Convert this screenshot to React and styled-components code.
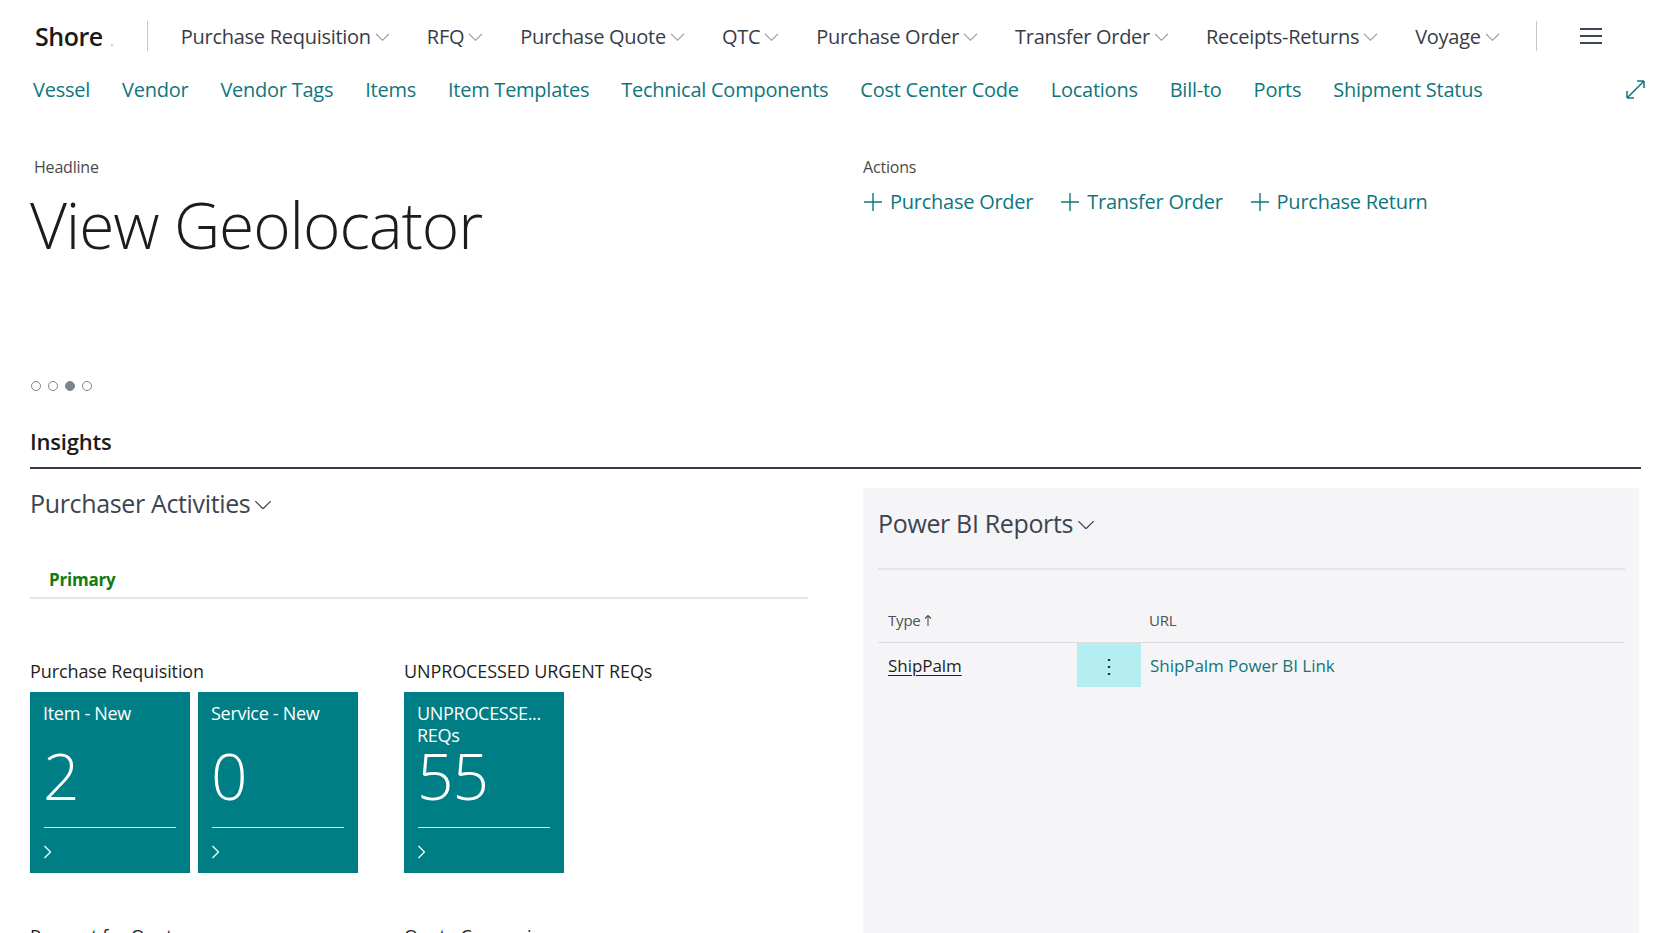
import React from "react";
import styled, { createGlobalStyle } from "styled-components";

const GlobalStyle = createGlobalStyle`
  html, body {
    margin: 0;
    padding: 0;
    overflow: hidden;
    background: #ffffff;
  }
  body {
    font-family: "Open Sans", "Noto Sans", sans-serif;
    color: #212121;
  }
`;

const teal = "#0f767d";
const slate = "#373d48";

const Page = styled.div`
  width: 1659px;
  height: 933px;
  overflow: hidden;
`;

const TopBar = styled.div`
  height: 72px;
  display: flex;
  align-items: center;
  padding-left: 35px;
`;

const Brand = styled.div`
  font-size: 25px;
  font-weight: 600;
  color: #1b1b1b;
  letter-spacing: -0.5px;
  display: flex;
  align-items: baseline;
`;

const BrandDot = styled.span`
  font-size: 10px;
  color: #9aa0a6;
  margin-left: 8px;
`;

const VDivider = styled.div`
  width: 1px;
  height: 30px;
  background: #c8c8c8;
  margin-left: ${(p) => p.$left || 0}px;
`;

const Menu = styled.nav`
  display: flex;
  align-items: center;
  gap: 37px;
  margin-left: 33px;
`;

const MenuItem = styled.div`
  display: flex;
  align-items: center;
  font-size: 20px;
  color: ${slate};
  letter-spacing: -0.28px;
  white-space: nowrap;
`;

const Caret = ({ size = 15, color = "#8a8f97" }) => (
  <svg width={size} height={size * 0.55} viewBox="0 0 16 9" style={{ marginLeft: 4, marginTop: 3 }}>
    <path d="M1 1 L8 8 L15 1" fill="none" stroke={color} strokeWidth="1.1" />
  </svg>
);

const MenuButton = styled.div`
  width: 22px;
  height: 16px;
  display: flex;
  flex-direction: column;
  justify-content: space-between;
  margin-left: 43px;
  span {
    display: block;
    height: 2px;
    background: #3c4654;
  }
`;

const LinkBar = styled.div`
  height: 34px;
  display: flex;
  align-items: center;
  padding: 0 13px 0 33px;
`;

const LinkList = styled.div`
  display: flex;
  gap: 32px;
  flex: 1;
`;

const NavLink = styled.a`
  font-size: 20px;
  color: ${teal};
  letter-spacing: -0.25px;
  white-space: nowrap;
  text-decoration: none;
`;

const HeadRow = styled.div`
  display: grid;
  grid-template-columns: 833px 1fr;
  padding-left: 30px;
  margin-top: 50px;
`;

const SmallCaption = styled.div`
  font-size: 16px;
  line-height: 22px;
  color: #4a4a4a;
  letter-spacing: -0.2px;
  padding-left: ${(p) => p.$indent || 0}px;
`;

const BigTitle = styled.h1`
  margin: 7px 0 0;
  font-size: 64px;
  line-height: 80px;
  font-weight: 300;
  color: #1c1c1c;
  letter-spacing: -1.1px;
`;

const Dots = styled.div`
  display: flex;
  gap: 7px;
  margin: 116px 0 0 1px;
`;

const Dot = styled.span`
  width: 8px;
  height: 8px;
  border-radius: 50%;
  border: 1px solid #7c8591;
  background: ${(p) => (p.$active ? "#7c8591" : "transparent")};
`;

const ActionList = styled.div`
  display: flex;
  gap: 27px;
  margin-top: 10px;
`;

const Action = styled.a`
  display: flex;
  align-items: center;
  gap: 7px;
  font-size: 20px;
  color: ${teal};
  letter-spacing: -0.25px;
  text-decoration: none;
  white-space: nowrap;
`;

const Insights = styled.div`
  margin: 35px 18px 0 30px;
  border-bottom: 2px solid #333d49;
  font-size: 22px;
  font-weight: 600;
  color: #1b1b1b;
  letter-spacing: -0.2px;
  padding-bottom: 11px;
`;

const Columns = styled.div`
  display: grid;
  grid-template-columns: 833px 776px;
  padding-left: 30px;
`;

const LeftCol = styled.div`
  padding-top: 17px;
  padding-right: 55px;
`;

const SectionTitle = styled.div`
  display: flex;
  align-items: center;
  font-size: 25px;
  color: #3d4450;
  letter-spacing: -0.35px;
`;

const Tabs = styled.div`
  margin-top: 48px;
  border-bottom: 2px solid #e1e5ea;
  padding: 0 0 6px 19px;
`;

const Tab = styled.span`
  font-size: 17px;
  font-weight: 700;
  color: #107c10;
  letter-spacing: -0.2px;
`;

const CueGroups = styled.div`
  display: flex;
  gap: 46px;
  margin-top: 59px;
`;

const CueGroup = styled.div`
  display: flex;
  flex-direction: column;
`;

const CueLabel = styled.div`
  font-size: 18px;
  font-weight: 500;
  color: #1f1f1f;
  letter-spacing: -0.1px;
  line-height: 26px;
  height: ${(p) => (p.$last ? 26 : 34)}px;
  margin-top: ${(p) => (p.$last ? 50 : 0)}px;
  white-space: nowrap;
`;

const Tiles = styled.div`
  display: flex;
  gap: 8px;
`;

const Tile = styled.div`
  width: 160px;
  height: 181px;
  box-sizing: border-box;
  background: #007e86;
  color: #fff;
  padding: 10px 14px 0 13px;
  display: flex;
  flex-direction: column;
`;

const TileTitle = styled.div`
  font-size: 18px;
  line-height: 22px;
  height: 44px;
  letter-spacing: -0.3px;
  overflow: hidden;
`;

const TileValue = styled.div`
  font-size: 64px;
  line-height: 60px;
  font-weight: 300;
  letter-spacing: -1px;
`;

const TileRule = styled.div`
  height: 1px;
  background: rgba(255, 255, 255, 0.85);
  margin: 21px 0 0 1px;
`;

const TileArrow = styled.div`
  margin-top: 14px;
  height: 14px;
`;

const Panel = styled.div`
  margin-top: 19px;
  background: #f5f5f7;
  padding: 18px 14px 0 15px;
  min-height: 460px;
`;

const PanelHeader = styled.div`
  border-bottom: 2px solid #e3e4e7;
  height: 64px;
  box-sizing: border-box;
`;

const Table = styled.div`
  margin-top: 33px;
`;

const TableRow = styled.div`
  display: grid;
  grid-template-columns: 199px 64px 1fr;
  height: ${(p) => (p.$head ? 40 : 44)}px;
  box-sizing: border-box;
  padding-bottom: ${(p) => (p.$head ? 5 : 0)}px;
  align-items: center;
  border-bottom: ${(p) => (p.$head ? "1px solid #dcdde0" : "none")};
`;

const HeadCell = styled.div`
  font-size: 15px;
  color: #505050;
  padding-left: ${(p) => p.$pad || 0}px;
  letter-spacing: -0.2px;
  display: flex;
  align-items: center;
  gap: 3px;
`;

const Cell = styled.div`
  font-size: 17px;
  letter-spacing: -0.05px;
  padding-left: ${(p) => p.$pad || 0}px;
  color: ${(p) => (p.$link ? teal : "#1f1f1f")};
  text-decoration: ${(p) => (p.$under ? "underline" : "none")};
  text-underline-offset: 3px;
`;

const MoreCell = styled.div`
  height: 44px;
  background: #b4eef0;
  display: flex;
  align-items: center;
  justify-content: center;
  font-size: 20px;
  color: #222;
`;

const Chevron = () => (
  <svg width="9" height="14" viewBox="0 0 9 14">
    <path d="M1.5 1 L7.5 7 L1.5 13" fill="none" stroke="#fff" strokeWidth="1.2" />
  </svg>
);

const Plus = () => (
  <svg width="20" height="20" viewBox="0 0 20 20">
    <path d="M10 1 V19 M1 10 H19" stroke={teal} strokeWidth="1.4" />
  </svg>
);

const SortUp = () => (
  <svg width="8" height="13" viewBox="0 0 8 13">
    <path d="M4 12 V1.5 M1 4.5 L4 1.5 L7 4.5" fill="none" stroke="#505050" strokeWidth="1.1" />
  </svg>
);

const ExpandIcon = () => (
  <svg width="21" height="21" viewBox="0 0 21 21">
    <path d="M2 19 L19 2 M2 19 V12 M2 19 H9 M19 2 H12 M19 2 V9" fill="none" stroke={teal} strokeWidth="1.5" />
  </svg>
);

const menuItems = ["Purchase Requisition", "RFQ", "Purchase Quote", "QTC", "Purchase Order", "Transfer Order", "Receipts-Returns", "Voyage"];
const links = ["Vessel", "Vendor", "Vendor Tags", "Items", "Item Templates", "Technical Components", "Cost Center Code", "Locations", "Bill-to", "Ports", "Shipment Status"];

const TileCard = ({ title, value }) => (
  <Tile>
    <TileTitle>{title}</TileTitle>
    <TileValue>{value}</TileValue>
    <TileRule />
    <TileArrow>
      <Chevron />
    </TileArrow>
  </Tile>
);

export default function App() {
  return (
    <Page>
      <GlobalStyle />
      <TopBar>
        <Brand>
          Shore<BrandDot>.</BrandDot>
        </Brand>
        <VDivider $left={34} />
        <Menu>
          {menuItems.map((m) => (
            <MenuItem key={m}>
              {m}
              <Caret />
            </MenuItem>
          ))}
        </Menu>
        <VDivider $left={36} />
        <MenuButton>
          <span />
          <span />
          <span />
        </MenuButton>
      </TopBar>

      <LinkBar>
        <LinkList>
          {links.map((l) => (
            <NavLink key={l}>{l}</NavLink>
          ))}
        </LinkList>
        <ExpandIcon />
      </LinkBar>

      <HeadRow>
        <div>
          <SmallCaption $indent={4}>Headline</SmallCaption>
          <BigTitle>View Geolocator</BigTitle>
          <Dots>
            <Dot />
            <Dot />
            <Dot $active />
            <Dot />
          </Dots>
        </div>
        <div>
          <SmallCaption>Actions</SmallCaption>
          <ActionList>
            <Action>
              <Plus />
              Purchase Order
            </Action>
            <Action>
              <Plus />
              Transfer Order
            </Action>
            <Action>
              <Plus />
              Purchase Return
            </Action>
          </ActionList>
        </div>
      </HeadRow>

      <Insights>Insights</Insights>

      <Columns>
        <LeftCol>
          <SectionTitle>
            Purchaser Activities
            <Caret size={18} color="#3d4450" />
          </SectionTitle>
          <Tabs>
            <Tab>Primary</Tab>
          </Tabs>
          <CueGroups>
            <CueGroup>
              <CueLabel>Purchase Requisition</CueLabel>
              <Tiles>
                <TileCard title="Item - New" value="2" />
                <TileCard title="Service - New" value="0" />
              </Tiles>
              <CueLabel $last>Request for Quote</CueLabel>
            </CueGroup>
            <CueGroup>
              <CueLabel>UNPROCESSED URGENT REQs</CueLabel>
              <Tiles>
                <TileCard title={<>UNPROCESSE...<br />REQs</>} value="55" />
              </Tiles>
              <CueLabel $last>Quote Comparison</CueLabel>
            </CueGroup>
          </CueGroups>
        </LeftCol>

        <Panel>
          <PanelHeader>
            <SectionTitle>
              Power BI Reports
              <Caret size={18} color="#3d4450" />
            </SectionTitle>
          </PanelHeader>
          <Table>
            <TableRow $head>
              <HeadCell $pad={10}>
                Type <SortUp />
              </HeadCell>
              <div />
              <HeadCell $pad={8}>URL</HeadCell>
            </TableRow>
            <TableRow>
              <Cell $pad={10} $under>
                ShipPalm
              </Cell>
              <MoreCell>⋮</MoreCell>
              <Cell $pad={9} $link>
                ShipPalm Power BI Link
              </Cell>
            </TableRow>
          </Table>
        </Panel>
      </Columns>
    </Page>
  );
}
